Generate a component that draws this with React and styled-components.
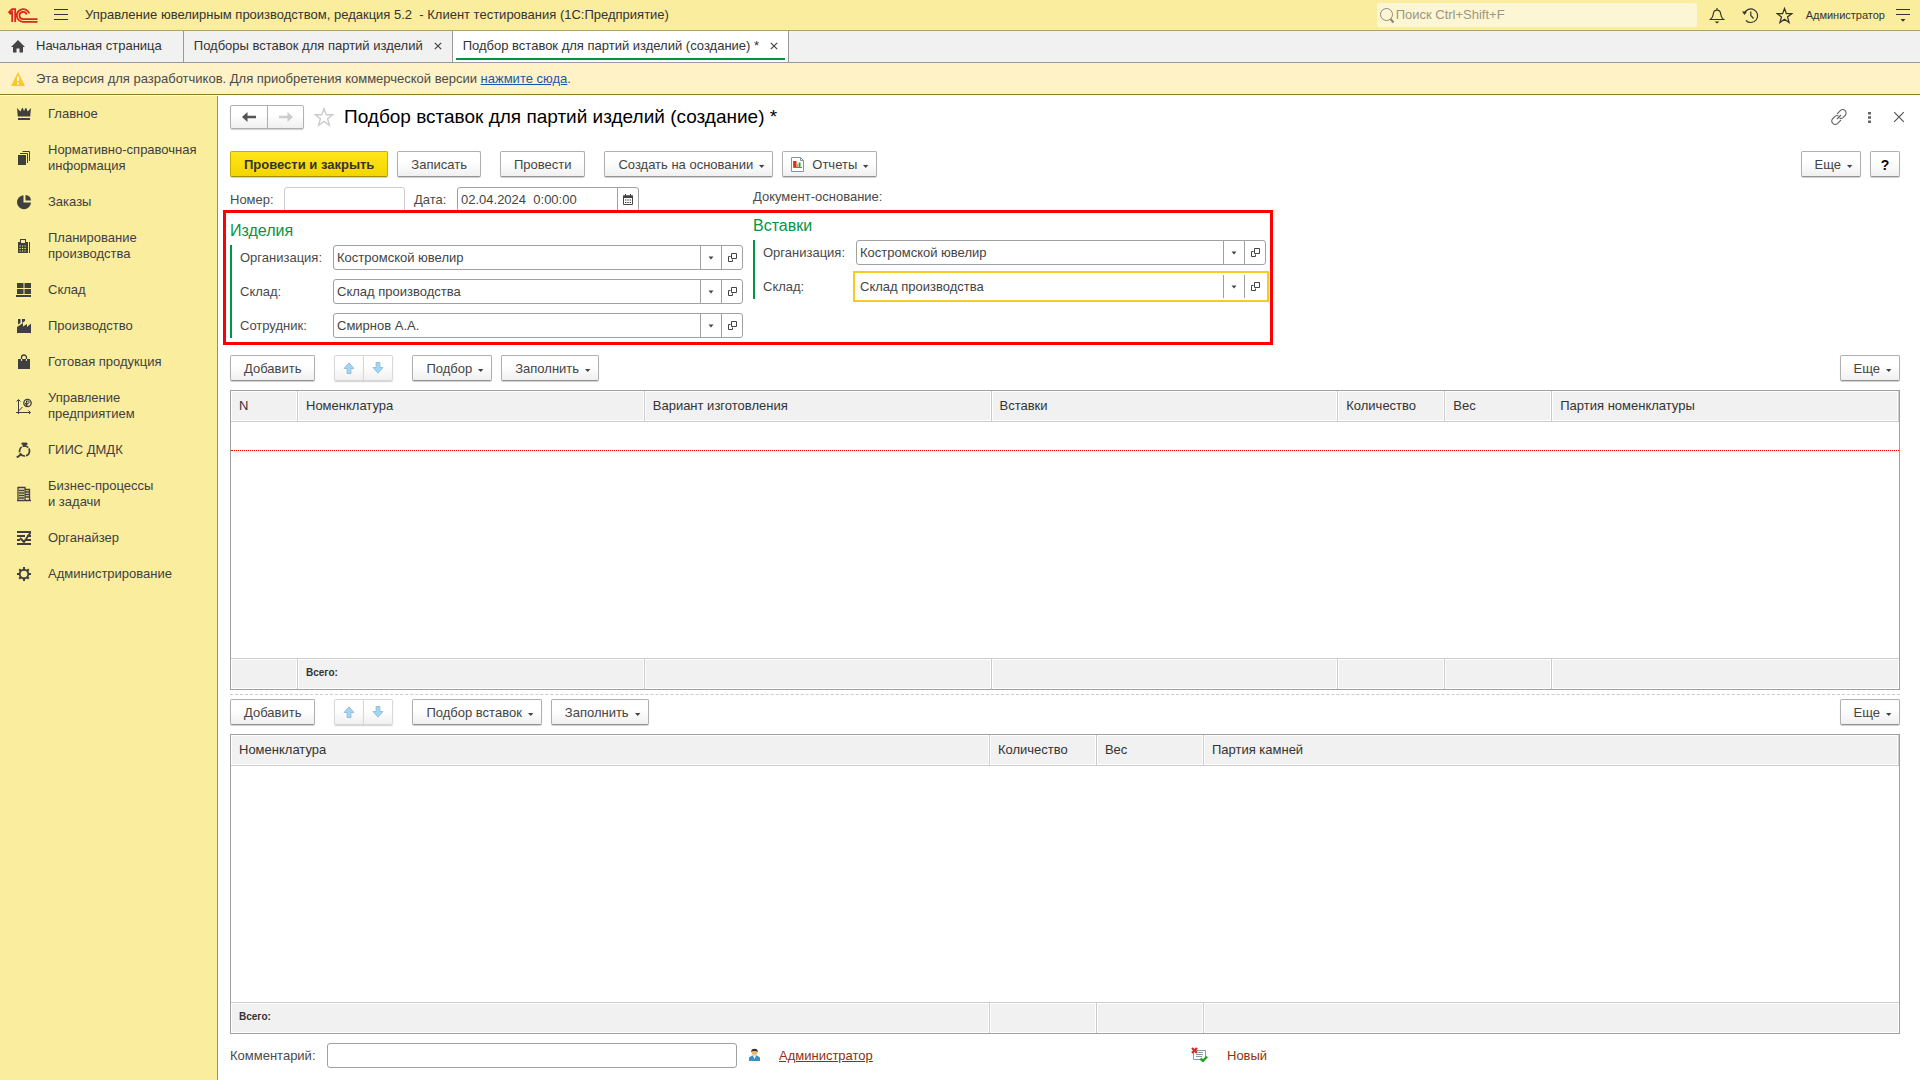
import React from 'react'
import styled, { createGlobalStyle, css } from 'styled-components'

const GlobalStyle = createGlobalStyle`
  * {
    box-sizing: border-box;
  }

  body {
    margin: 0;
    background: #fff;
    color: #4a4a4a;
  }

  body, button, input {
    font-family: 'Liberation Sans', Arial, sans-serif;
    font-size: 13px;
    line-height: 16px;
  }

  button {
    cursor: pointer;
  }

  svg {
    display: block;
    flex: none;
  }
`

const Page = styled.div`
  display: flex;
  flex-direction: column;
  height: 100vh;
`

/* top bar */

const TopBar = styled.header`
  display: flex;
  align-items: center;
  height: 31px;
  padding: 0 10px 0 8px;
  background: #fbed9e;
  border-bottom: 1px solid #a9a26c;
  color: #333;
`

const IconButton = styled.button`
  display: flex;
  align-items: center;
  justify-content: center;
  width: ${props => props.$width || 20}px;
  height: 24px;
  padding: 0;
  border: 0;
  background: none;
  color: ${props => props.$color || '#333'};
`

const AppTitle = styled.div`
  flex: 1;
  padding-left: 1px;
  white-space: pre;
`

const Search = styled.label`
  display: flex;
  align-items: center;
  width: 320px;
  height: 24px;
  padding-left: 2px;
  margin-right: 10px;
  border-radius: 2px;
  background: #fdf6d5;
  color: #8f8a70;

  input {
    flex: 1;
    padding: 0 1px 1px;
    border: 0;
    outline: 0;
    background: none;
  }

  input::placeholder {
    color: #9c977f;
  }
`

const TopActions = styled.div`
  display: flex;
  align-items: center;
  gap: 11px;
`

const TopIcons = styled.div`
  display: flex;
  gap: 14px;
`

const UserName = styled.a`
  color: #333;
  font-size: 11px;
  text-decoration: none;
`

/* window tabs */

const TabBar = styled.nav`
  display: flex;
  height: 32px;
  background: #f1f1f1;
  border-bottom: 1px solid #999;
`

const Tab = styled.div`
  display: flex;
  padding: 0 3px 2px;
  border-right: 1px solid #999;
  background: ${props => (props.$active ? '#fff' : 'none')};
`

const TabInner = styled.div`
  display: flex;
  align-items: center;
  gap: ${props => (props.$home ? 9 : 11)}px;
  padding: 3px ${props => (props.$home ? 18 : 7)}px 0 7px;
  border-bottom: 2px solid ${props => (props.$active ? '#009646' : 'transparent')};

  a {
    color: #333;
    text-decoration: none;
  }
`

const TabClose = styled.button`
  display: flex;
  padding: 0;
  border: 0;
  background: none;
  color: #444;
`

const Notice = styled.div`
  display: flex;
  align-items: center;
  gap: 11px;
  height: 32px;
  padding: 0 11px;
  background: #fef2c6;
  border-bottom: 1px solid #937b20;

  a {
    color: #1c55ae;
  }
`

/* section list */

const Body = styled.div`
  display: flex;
  flex: 1;
  min-height: 0;
  padding-top: 1px;
`

const Sidebar = styled.nav`
  flex: none;
  width: 218px;
  background: #fbed9e;
  border-right: 1px solid #999067;
`

const SideLink = styled.a`
  display: flex;
  align-items: center;
  gap: 16px;
  padding: 10px 16px;
  color: #3f3f3f;
  text-decoration: none;
  white-space: pre-line;
`

/* document form */

const Main = styled.main`
  display: flex;
  flex-direction: column;
  flex: 1;
  min-width: 0;
  padding: 9px 20px 12px 12px;
`

const TitleRow = styled.div`
  display: flex;
  align-items: center;
  height: 24px;
  margin-bottom: 22px;
`

const Title = styled.h1`
  flex: 1;
  margin: 0;
  color: #000;
  font-size: 19px;
  line-height: 24px;
  font-weight: 400;
`

const WindowActions = styled.div`
  display: flex;
  gap: 10px;
  margin-right: -9px;
`

const raised = css`
  display: flex;
  align-items: center;
  justify-content: center;
  height: 26px;
  border: 1px solid #b0b0b0;
  border-bottom-color: #929292;
  border-radius: 2px;
  background: linear-gradient(#fff 40%, #f0f0f0);
  box-shadow: 0 1px 1px #d0d0d0;
`

const Button = styled.button`
  ${raised}
  gap: 5px;
  padding: 1px ${props => (props.$menu ? 7 : 13)}px 0 13px;
  color: #444;

  ${props =>
    props.$primary &&
    css`
      border-color: #c9ac00;
      border-bottom-color: #a58d00;
      background: linear-gradient(#ffe61a, #f3d500);
      color: #333;
      font-weight: 700;
    `}
`

const HelpButton = styled(Button)`
  width: 30px;
  padding: 1px 0 0;
  color: #000;
  font-size: 14px;
  font-weight: 700;
`

const ReportButton = styled(Button)`
  padding-left: 8px;

  svg:first-child {
    margin-right: 3px;
  }
`

const Pair = styled.div`
  display: flex;
`

const PairButton = styled.button`
  ${raised}
  width: ${props => props.$width}px;
  height: ${props => props.$height || 26}px;
  padding: 0;
  color: ${props => (props.$muted ? '#ccc' : '#555')};
  border-color: ${props => (props.$light ? '#d9d9d9' : '#b0b0b0')};

  &:first-child {
    border-radius: 2px 0 0 2px;
  }

  &:last-child {
    margin-left: -1px;
    border-radius: 0 2px 2px 0;
  }
`

const Toolbar = styled.div`
  display: flex;
  align-items: center;
  flex: none;
  gap: 9px;
  height: 26px;
`

const Group = styled.div`
  display: flex;
  gap: 9px;
  margin-right: 10px;
`

const Spacer = styled.div`
  flex: 1;
`

const HeaderRow = styled.div`
  display: flex;
  flex: none;
  height: 23px;
  margin-top: 10px;
  overflow: hidden;
`

const HeaderFields = styled.div`
  display: flex;
  width: 523px;
`

const BaseDocument = styled.span`
  line-height: 20px;
`

const Label = styled.label`
  width: ${props => (props.$width ? `${props.$width}px` : 'auto')};
  flex: none;
  line-height: 25px;
`

const Field = styled.div`
  display: flex;
  width: ${props => props.$width}px;
  height: 25px;
  margin-right: ${props => props.$after || 0}px;
  border: 1px solid ${props => (props.$dim ? '#ccc' : '#a0a0a0')};
  border-radius: 3px;
  background: #fff;

  ${props =>
    props.$focused &&
    css`
      border-color: transparent;
      outline: 2px solid #f9cb22;
      outline-offset: 1px;
      border-radius: 0;
    `}

  input {
    flex: 1;
    min-width: 0;
    padding: 0 3px;
    border: 0;
    outline: 0;
    background: none;
    color: #444;
  }
`

const FieldButton = styled.button`
  display: flex;
  align-items: center;
  justify-content: center;
  width: 21px;
  padding: 0;
  border: 0;
  border-left: 1px solid #a0a0a0;
  background: none;
  color: #444;
`

const Highlight = styled.section`
  display: flex;
  align-items: flex-start;
  align-self: flex-start;
  flex: none;
  height: 135px;
  margin: 0 0 10px -7px;
  padding: 0 4px;
  border: 3px solid #f00;
`

const Party = styled.div`
  width: ${props => props.$width}px;
  padding-top: ${props => props.$top}px;
`

const PartyTitle = styled.h2`
  margin: 0 0 4px;
  color: #009646;
  font-size: 16px;
  line-height: 20px;
  font-weight: 400;
`

const PartyFields = styled.div`
  display: flex;
  flex-direction: column;
  gap: 9px;
  padding-left: 8px;
  border-left: 2px solid #009646;
`

const FieldRow = styled.div`
  display: flex;
`

/* tables */

const TableBox = styled.div`
  flex: 1 1 0;
  min-height: 0;
  margin-top: 9px;
  border: 1px solid #a0a0a0;
`

const Table = styled.table`
  width: 100%;
  height: 100%;
  table-layout: fixed;
  border-collapse: separate;
  border-spacing: 0;

  th, tfoot td {
    padding: 0 8px;
    background: #f1f1f1;
    border-right: 1px solid #ccc;
    box-shadow: inset 0 0 0 1px #fff;
    color: #333;
    font-weight: 400;
    text-align: left;
  }

  th {
    height: 31px;
    border-bottom: 1px solid #ccc;
  }

  tfoot td {
    height: 31px;
    padding-bottom: 3px;
    border-top: 1px solid #ccc;
    font-size: 10px;
    font-weight: 700;
  }

  tfoot td:last-child {
    border-right: 0;
  }

  tbody td {
    padding: 0;
  }
`

const NewRow = styled.tr`
  td {
    height: 29px;
    border-bottom: 1px dotted #f00;
  }
`

const Splitter = styled.hr`
  flex: none;
  width: 100%;
  height: 1px;
  margin: 4px 0;
  border: 0;
  border-top: 1px dashed #ccc;
`

const Footer = styled.footer`
  display: flex;
  flex: none;
  height: 25px;
  margin-top: 9px;
`

const FooterLink = styled.a`
  width: ${props => (props.$width ? `${props.$width}px` : 'auto')};
  margin-left: 19px;
  color: #8f3110;
  line-height: 25px;
  text-decoration: ${props => (props.$plain ? 'none' : 'underline')};
`

const FooterIcon = styled.span`
  display: flex;
  align-items: center;
  height: 23px;
`

const Caret = () => (
  <svg width="7" height="16" viewBox="0 0 7 16" fill="currentColor">
    <path d="M1 8h5.400L3.700 11z" />
  </svg>
)

const FieldCaret = () => (
  <svg width="6" height="4" viewBox="0 0 6 4" fill="currentColor">
    <path d="M.5.5h5L3 3.500z" />
  </svg>
)

const Logo = () => (
  <svg width="30" height="15" viewBox="0 0 30 15" fill="none" stroke="#d9261c" strokeWidth="1.800">
    <path d="M0.500 4.800 4 1.200H7.200V14M1.500 6.200 4.200 4V14" />
    <path d="M21.300 5.500A6.400 6.400 0 1 0 15.500 13.900H29.500" />
    <path d="M18.600 6.600A3.600 3.600 0 1 0 15.500 11.100H29.500" />
  </svg>
)

const Star = ({ size = 17, color = 'currentColor' }) => (
  <svg width={size} height={size} viewBox="0 0 18 18" fill="none" stroke={color} strokeWidth="1.300">
    <path d="M9 1.500 11 7h5.800l-4.600 3.500 1.700 6L9 13l-4.900 3.500 1.700-6L1.200 7H7z" />
  </svg>
)

const Cross = ({ size }) => (
  <svg width={size} height={size} viewBox="0 0 10 10" fill="none" stroke="currentColor" strokeWidth={size > 9 ? 1 : 1.500}>
    <path d="M1 1l8 8M9 1 1 9" />
  </svg>
)

const Arrow = ({ back }) => (
  <svg width="14" height="12" viewBox="0 0 14 12" fill="currentColor">
    <path d={back ? 'M0 6 5.500 1v3.700H14v2.600H5.500V11z' : 'M14 6 8.500 1v3.700H0v2.600h8.500V11z'} />
  </svg>
)

const MoveArrow = ({ down }) => (
  <svg width="12" height="12" viewBox="0 0 12 13" fill="#9fd8f5" stroke="#8fb9d4">
    <path d={down ? 'M4 .5h4V6h3.300L6 12 .7 6H4z' : 'M4 12.500h4V7h3.300L6 1 .7 7H4z'} />
  </svg>
)

const OpenIcon = () => (
  <svg width="11" height="11" viewBox="0 0 11 11" fill="none" stroke="currentColor">
    <path d="M4.500 1.500h5v5h-5zM3.500 4.500h-2v5h4v-2" />
  </svg>
)

const CalendarIcon = () => (
  <svg width="10" height="11" viewBox="0 0 10 11">
    <path d="M.5 2v8.500h9V2z" fill="none" stroke="#444" />
    <path d="M0 1.500h10V4H0zM2 0h1v3H2zM7 0h1v3H7z" fill="#444" />
    <path d="M2 6h1.500M4.300 6h1.500M6.600 6h1.500M2 8.500h1.500M4.300 8.500h1.500M6.600 8.500h1.500" stroke="#444" />
  </svg>
)

const ReportIcon = () => (
  <svg width="13" height="15" viewBox="0 0 13 15">
    <path d="M.5.5h9l3 3v11H.5z" fill="#fff" stroke="#8295a8" />
    <path d="M9.500.5v3h3" fill="none" stroke="#8295a8" />
    <path d="M3 4v6h2.500V4z" fill="#e02a20" />
    <path d="M5.500 7v3H7V7z" fill="#f0a020" />
    <path d="M7.500 5.500V10h2V5.500z" fill="#2f9e3a" />
    <path d="M2.500 4v6.500H11" fill="none" stroke="#777" />
  </svg>
)

const sectionIcons = {
  main: <path d="M1 2l3.500 3.500L6 2h.8L8 5l1.500-3h.7l1.500 3.500L15 2l-.8 8.500H1.800zM2 12h12v2H2z" />,
  books: (
    <>
      <path d="M2 5h8v10H2z" />
      <path d="M4 3.500h7.500V13M6.500 1.500h7V11" fill="none" stroke="currentColor" />
    </>
  ),
  orders: (
    <>
      <path d="M7.500 1.200V8.500H15A7 7 0 1 1 7.500 1.200z" />
      <path d="M9.500 1a6 6 0 0 1 5.500 5.500H9.500z" />
    </>
  ),
  planning: (
    <>
      <path d="M4 1h6v3h2v11H2V4h2zM5 2v3h4V2z" fillRule="evenodd" />
      <path d="M3.500 8h7.500M3.500 10.500h7.500M3.500 13h7.500" stroke="#fbed9e" strokeDasharray="1.200 1.300" />
      <path d="M13.500 4v11" stroke="currentColor" />
    </>
  ),
  store: <path d="M1 1h6.500v5H1zM8.500 1H15v5H8.500zM1 7h6.500v5H1zM8.500 7H15v5H8.500zM0 13h15v2H0z" />,
  factory: <path d="M2 1h2.500v4L2 6.500zM6 1h3v2L6 5zM1 9l6-4v3.500L11 6v3l4-3.500V15H1z" />,
  bag: (
    <>
      <path d="M2 5h12v10H2z" />
      <path d="M5.500 5V3.500a2.500 2.500 0 0 1 5 0V5" fill="none" stroke="currentColor" strokeWidth="1.300" />
      <path d="M5.500 5v2M10.500 5v2" stroke="#fbed9e" />
    </>
  ),
  growth: (
    <>
      <path d="M2.500 2v14M0 14.500h14M.5 3.500l2-2 2 2M12.500 12.500l2 2-2 2M2.500 13l4-4" fill="none" stroke="currentColor" />
      <circle cx="11.500" cy="5" r="3.700" fill="none" stroke="currentColor" strokeWidth="1.300" />
      <path d="M10.500 8V3h1.500a1.200 1.200 0 0 1 0 2.400H9M9 7h3" fill="none" stroke="currentColor" />
    </>
  ),
  ring: (
    <>
      <path d="M5 1.500 6.500.5h4L12 2 8.500 5z" />
      <circle cx="8.500" cy="9" r="5" fill="none" stroke="currentColor" strokeWidth="1.700" strokeDasharray="6 1" />
      <path d="M5 12.500.8 15.500" stroke="currentColor" strokeWidth="2" />
    </>
  ),
  building: (
    <path
      d="M2 15V1.500h7V15M9 3.500h4.500V15M3 4.500h5M3 7h5M3 9.500h5M3 12h5M9.500 6h3.500M9.500 8.500h3.500M9.500 11h3.500M1 14.500h14"
      fill="none"
      stroke="currentColor"
      strokeWidth="1.300"
    />
  ),
  organizer: (
    <path d="M1 2h14M1 6h8M11 6h4M1 10h3M9 10h6M1 14h14M4 8l4 4 6.500-9.500" fill="none" stroke="currentColor" strokeWidth="1.900" />
  ),
  gear: (
    <>
      <circle cx="8" cy="8" r="4.300" fill="none" stroke="currentColor" strokeWidth="1.900" />
      <path
        d="M8 1v3M8 12v3M1 8h3M12 8h3M3.200 3.200l2 2M10.800 10.800l2 2M3.200 12.800l2-2M10.800 5.200l2-2"
        stroke="currentColor"
        strokeWidth="2"
      />
    </>
  )
}

const sections = [
  { icon: 'main', title: 'Главное' },
  { icon: 'books', title: 'Нормативно-справочная\nинформация' },
  { icon: 'orders', title: 'Заказы' },
  { icon: 'planning', title: 'Планирование\nпроизводства' },
  { icon: 'store', title: 'Склад' },
  { icon: 'factory', title: 'Производство' },
  { icon: 'bag', title: 'Готовая продукция' },
  { icon: 'growth', title: 'Управление\nпредприятием' },
  { icon: 'ring', title: 'ГИИС ДМДК' },
  { icon: 'building', title: 'Бизнес-процессы\nи задачи' },
  { icon: 'organizer', title: 'Органайзер' },
  { icon: 'gear', title: 'Администрирование' }
]

const productColumns = [
  { title: 'N', width: '67px' },
  { title: 'Номенклатура', total: 'Всего:' },
  { title: 'Вариант изготовления' },
  { title: 'Вставки' },
  { title: 'Количество', width: '107px' },
  { title: 'Вес', width: '107px' },
  { title: 'Партия номенклатуры' }
]

const insertColumns = [
  { title: 'Номенклатура', width: '45.5%', total: 'Всего:' },
  { title: 'Количество', width: '107px' },
  { title: 'Вес', width: '107px' },
  { title: 'Партия камней' }
]

const MenuButton = ({ children }) => (
  <Button type="button" $menu>
    {children}
    <Caret />
  </Button>
)

const Combo = ({ id, label, value, focused }) => (
  <FieldRow>
    <Label htmlFor={id} $width={93}>
      {label}
    </Label>
    <Field $width={410} $focused={focused}>
      <input id={id} defaultValue={value} />
      <FieldButton type="button" aria-label="Выбрать">
        <FieldCaret />
      </FieldButton>
      <FieldButton type="button" aria-label="Открыть">
        <OpenIcon />
      </FieldButton>
    </Field>
  </FieldRow>
)

const TableToolbar = ({ pick }) => (
  <Toolbar>
    <Group>
      <Button type="button">Добавить</Button>
    </Group>
    <Group>
      <Pair>
        <PairButton type="button" $width={30} $light aria-label="Вверх">
          <MoveArrow />
        </PairButton>
        <PairButton type="button" $width={30} $light aria-label="Вниз">
          <MoveArrow down />
        </PairButton>
      </Pair>
    </Group>
    <MenuButton>{pick}</MenuButton>
    <MenuButton>Заполнить</MenuButton>
    <Spacer />
    <MenuButton>Еще</MenuButton>
  </Toolbar>
)

const Grid = ({ columns, editing }) => (
  <TableBox>
    <Table>
      <colgroup>
        {columns.map(column => (
          <col key={column.title} width={column.width} />
        ))}
      </colgroup>
      <thead>
        <tr>
          {columns.map(column => (
            <th key={column.title} scope="col">
              {column.title}
            </th>
          ))}
        </tr>
      </thead>
      <tbody>
        {editing && (
          <NewRow>
            <td colSpan={columns.length} />
          </NewRow>
        )}
        <tr>
          <td colSpan={columns.length} />
        </tr>
      </tbody>
      <tfoot>
        <tr>
          {columns.map(column => (
            <td key={column.title}>{column.total}</td>
          ))}
        </tr>
      </tfoot>
    </Table>
  </TableBox>
)

const App = () => (
  <Page>
    <GlobalStyle />
    <TopBar>
      <Logo />
      <IconButton type="button" $width={46} aria-label="Меню">
        <svg width="14" height="12" viewBox="0 0 14 12" stroke="currentColor">
          <path d="M0 .5h14M0 5.500h14M0 10.500h14" />
        </svg>
      </IconButton>
      <AppTitle>{'Управление ювелирным производством, редакция 5.2  - Клиент тестирования (1С:Предприятие)'}</AppTitle>
      <Search>
        <svg width="16" height="17" viewBox="0 0 16 17" fill="none" stroke="currentColor">
          <circle cx="7.500" cy="7.500" r="6" />
          <path d="M11.500 12l3 3.500" strokeWidth="2.200" />
        </svg>
        <input type="search" aria-label="Поиск" placeholder="Поиск Ctrl+Shift+F" />
      </Search>
      <TopActions>
        <TopIcons>
          <IconButton type="button" aria-label="Уведомления">
            <svg width="16" height="17" viewBox="0 0 16 17" fill="none" stroke="currentColor" strokeWidth="1.200">
              <path d="M1.500 12.500c2-1.500 2.500-3 2.800-5.500C4.600 4.500 6 3.200 8 3.200s3.400 1.300 3.700 3.800c.3 2.500.8 4 2.800 5.500zM8 1v2" />
              <path d="M5.500 14.500h5l-2.500 2z" fill="currentColor" stroke="none" />
            </svg>
          </IconButton>
          <IconButton type="button" aria-label="История">
            <svg width="17" height="17" viewBox="0 0 17 17" fill="none" stroke="currentColor" strokeWidth="1.200">
              <path d="M2.400 6.500A6.800 6.800 0 1 1 4 13.500M8.800 4.500v4l2.700 3" />
              <path d="M0 4.500h5L2.500 8z" fill="currentColor" stroke="none" />
            </svg>
          </IconButton>
          <IconButton type="button" aria-label="Избранное">
            <Star size={17} />
          </IconButton>
        </TopIcons>
        <UserName href="#user">Администратор</UserName>
        <IconButton type="button" $width={14} aria-label="Настройки">
          <svg width="14" height="14" viewBox="0 0 14 14" stroke="currentColor">
            <path d="M0 1.500h14M0 6.500h14" />
            <path d="M4.500 11h5L7 13.800z" fill="currentColor" stroke="none" />
          </svg>
        </IconButton>
      </TopActions>
    </TopBar>
    <TabBar>
      <Tab>
        <TabInner $home>
          <svg width="17" height="13" viewBox="0 0 17 13" fill="#444">
            <path d="M8 0 15 7h-2v5.500H9.500v-4h-3v4H3V7H1z" />
          </svg>
          <a href="#home">Начальная страница</a>
        </TabInner>
      </Tab>
      <Tab>
        <TabInner>
          <a href="#list">Подборы вставок для партий изделий</a>
          <TabClose type="button" aria-label="Закрыть">
            <Cross size={8} />
          </TabClose>
        </TabInner>
      </Tab>
      <Tab $active>
        <TabInner $active>
          <a href="#new">Подбор вставок для партий изделий (создание) *</a>
          <TabClose type="button" aria-label="Закрыть">
            <Cross size={8} />
          </TabClose>
        </TabInner>
      </Tab>
    </TabBar>
    <Notice>
      <svg width="14" height="14" viewBox="0 0 14 14">
        <path d="M7 0 14 14H0z" fill="#fbc926" />
        <path d="M7 4.500v4.500M7 10.500v2" stroke="#fff" strokeWidth="1.800" />
      </svg>
      <span>
        Эта версия для разработчиков. Для приобретения коммерческой версии <a href="#buy">нажмите сюда</a>.
      </span>
    </Notice>
    <Body>
      <Sidebar>
        {sections.map(section => (
          <SideLink key={section.icon} href={`#${section.icon}`}>
            <svg width="16" height="16" viewBox="0 0 16 16" fill="currentColor">
              {sectionIcons[section.icon]}
            </svg>
            {section.title}
          </SideLink>
        ))}
      </Sidebar>
      <Main>
        <TitleRow>
          <Pair>
            <PairButton type="button" $width={38} $height={24} aria-label="Назад">
              <Arrow back />
            </PairButton>
            <PairButton type="button" $width={37} $height={24} $muted aria-label="Вперед">
              <Arrow />
            </PairButton>
          </Pair>
          <IconButton type="button" $width={40} aria-label="В избранное">
            <Star size={20} color="#ccc" />
          </IconButton>
          <Title>Подбор вставок для партий изделий (создание) *</Title>
          <WindowActions>
            <IconButton type="button" $color="#666" aria-label="Ссылка">
              <svg width="16" height="16" viewBox="0 0 16 16" fill="none" stroke="currentColor" strokeWidth="1.100">
                <path d="M6 5 9.300 1.700a3.300 3.300 0 0 1 4.800 4.800L12 8.600a3 3 0 0 1-3.500.4M10 11l-3.300 3.300a3.300 3.300 0 0 1-4.800-4.800L4 7.400A3 3 0 0 1 7.500 7M6 10l4-4" />
              </svg>
            </IconButton>
            <IconButton type="button" $color="#666" aria-label="Действия">
              <svg width="3" height="11" viewBox="0 0 3 11" fill="currentColor">
                <path d="M0 0h3v2.400H0zM0 4.300h3v2.400H0zM0 8.600h3V11H0z" />
              </svg>
            </IconButton>
            <IconButton type="button" $color="#555" aria-label="Закрыть">
              <Cross size={12} />
            </IconButton>
          </WindowActions>
        </TitleRow>
        <Toolbar>
          <Button type="button" $primary>
            Провести и закрыть
          </Button>
          <Group>
            <Button type="button">Записать</Button>
          </Group>
          <Group>
            <Button type="button">Провести</Button>
          </Group>
          <MenuButton>Создать на основании</MenuButton>
          <ReportButton type="button" $menu>
            <ReportIcon />
            Отчеты
            <Caret />
          </ReportButton>
          <Spacer />
          <MenuButton>Еще</MenuButton>
          <HelpButton type="button">?</HelpButton>
        </Toolbar>
        <HeaderRow>
          <HeaderFields>
            <Label htmlFor="number" $width={54}>
              Номер:
            </Label>
            <Field $width={121} $dim $after={9}>
              <input id="number" />
            </Field>
            <Label htmlFor="date" $width={43}>
              Дата:
            </Label>
            <Field $width={182}>
              <input id="date" defaultValue="02.04.2024  0:00:00" />
              <FieldButton type="button" aria-label="Календарь">
                <CalendarIcon />
              </FieldButton>
            </Field>
          </HeaderFields>
          <BaseDocument>Документ-основание:</BaseDocument>
        </HeaderRow>
        <Highlight>
          <Party $width={523} $top={8}>
            <PartyTitle>Изделия</PartyTitle>
            <PartyFields>
              <Combo id="org" label="Организация:" value="Костромской ювелир" />
              <Combo id="store" label="Склад:" value="Склад производства" />
              <Combo id="worker" label="Сотрудник:" value="Смирнов А.А." />
            </PartyFields>
          </Party>
          <Party $width={513} $top={3}>
            <PartyTitle>Вставки</PartyTitle>
            <PartyFields>
              <Combo id="insert-org" label="Организация:" value="Костромской ювелир" />
              <Combo id="insert-store" label="Склад:" value="Склад производства" focused />
            </PartyFields>
          </Party>
        </Highlight>
        <TableToolbar pick="Подбор" />
        <Grid columns={productColumns} editing />
        <Splitter />
        <TableToolbar pick="Подбор вставок" />
        <Grid columns={insertColumns} />
        <Footer>
          <Label htmlFor="comment" $width={97}>
            Комментарий:
          </Label>
          <Field $width={410} $after={12}>
            <input id="comment" />
          </Field>
          <FooterIcon>
            <svg width="11" height="13" viewBox="0 0 11 13">
              <path d="M0 13V9.500L3 7.500h5l3 2V13z" fill="#3b8fc4" />
              <path d="M4 7.500 5.500 11 7 7.500z" fill="#fff" />
              <circle cx="5.500" cy="4" r="3" fill="#efb467" />
              <path d="M2.200 4a3.300 3.300 0 0 1 6.600 0C8 2.500 3 2.500 2.200 4z" fill="#333" />
            </svg>
          </FooterIcon>
          <FooterLink href="#author" $width={412}>
            Администратор
          </FooterLink>
          <FooterIcon>
            <svg width="17" height="15" viewBox="0 0 17 15">
              <path d="M2.500 3.500h12v9h-12z" fill="#fff" stroke="#8799ab" />
              <path d="M7 5.500h5M5 7.500h7M5 9.500h6" stroke="#8799ab" />
              <path d="M1 1l5 5M6 1 1 6" stroke="#d62b2b" strokeWidth="2.300" />
              <path d="M9.500 11.500l2.500 2.500 4-4.500" fill="none" stroke="#26a52c" strokeWidth="2.500" />
            </svg>
          </FooterIcon>
          <FooterLink href="#state" $plain>
            Новый
          </FooterLink>
        </Footer>
      </Main>
    </Body>
  </Page>
)

export default App
